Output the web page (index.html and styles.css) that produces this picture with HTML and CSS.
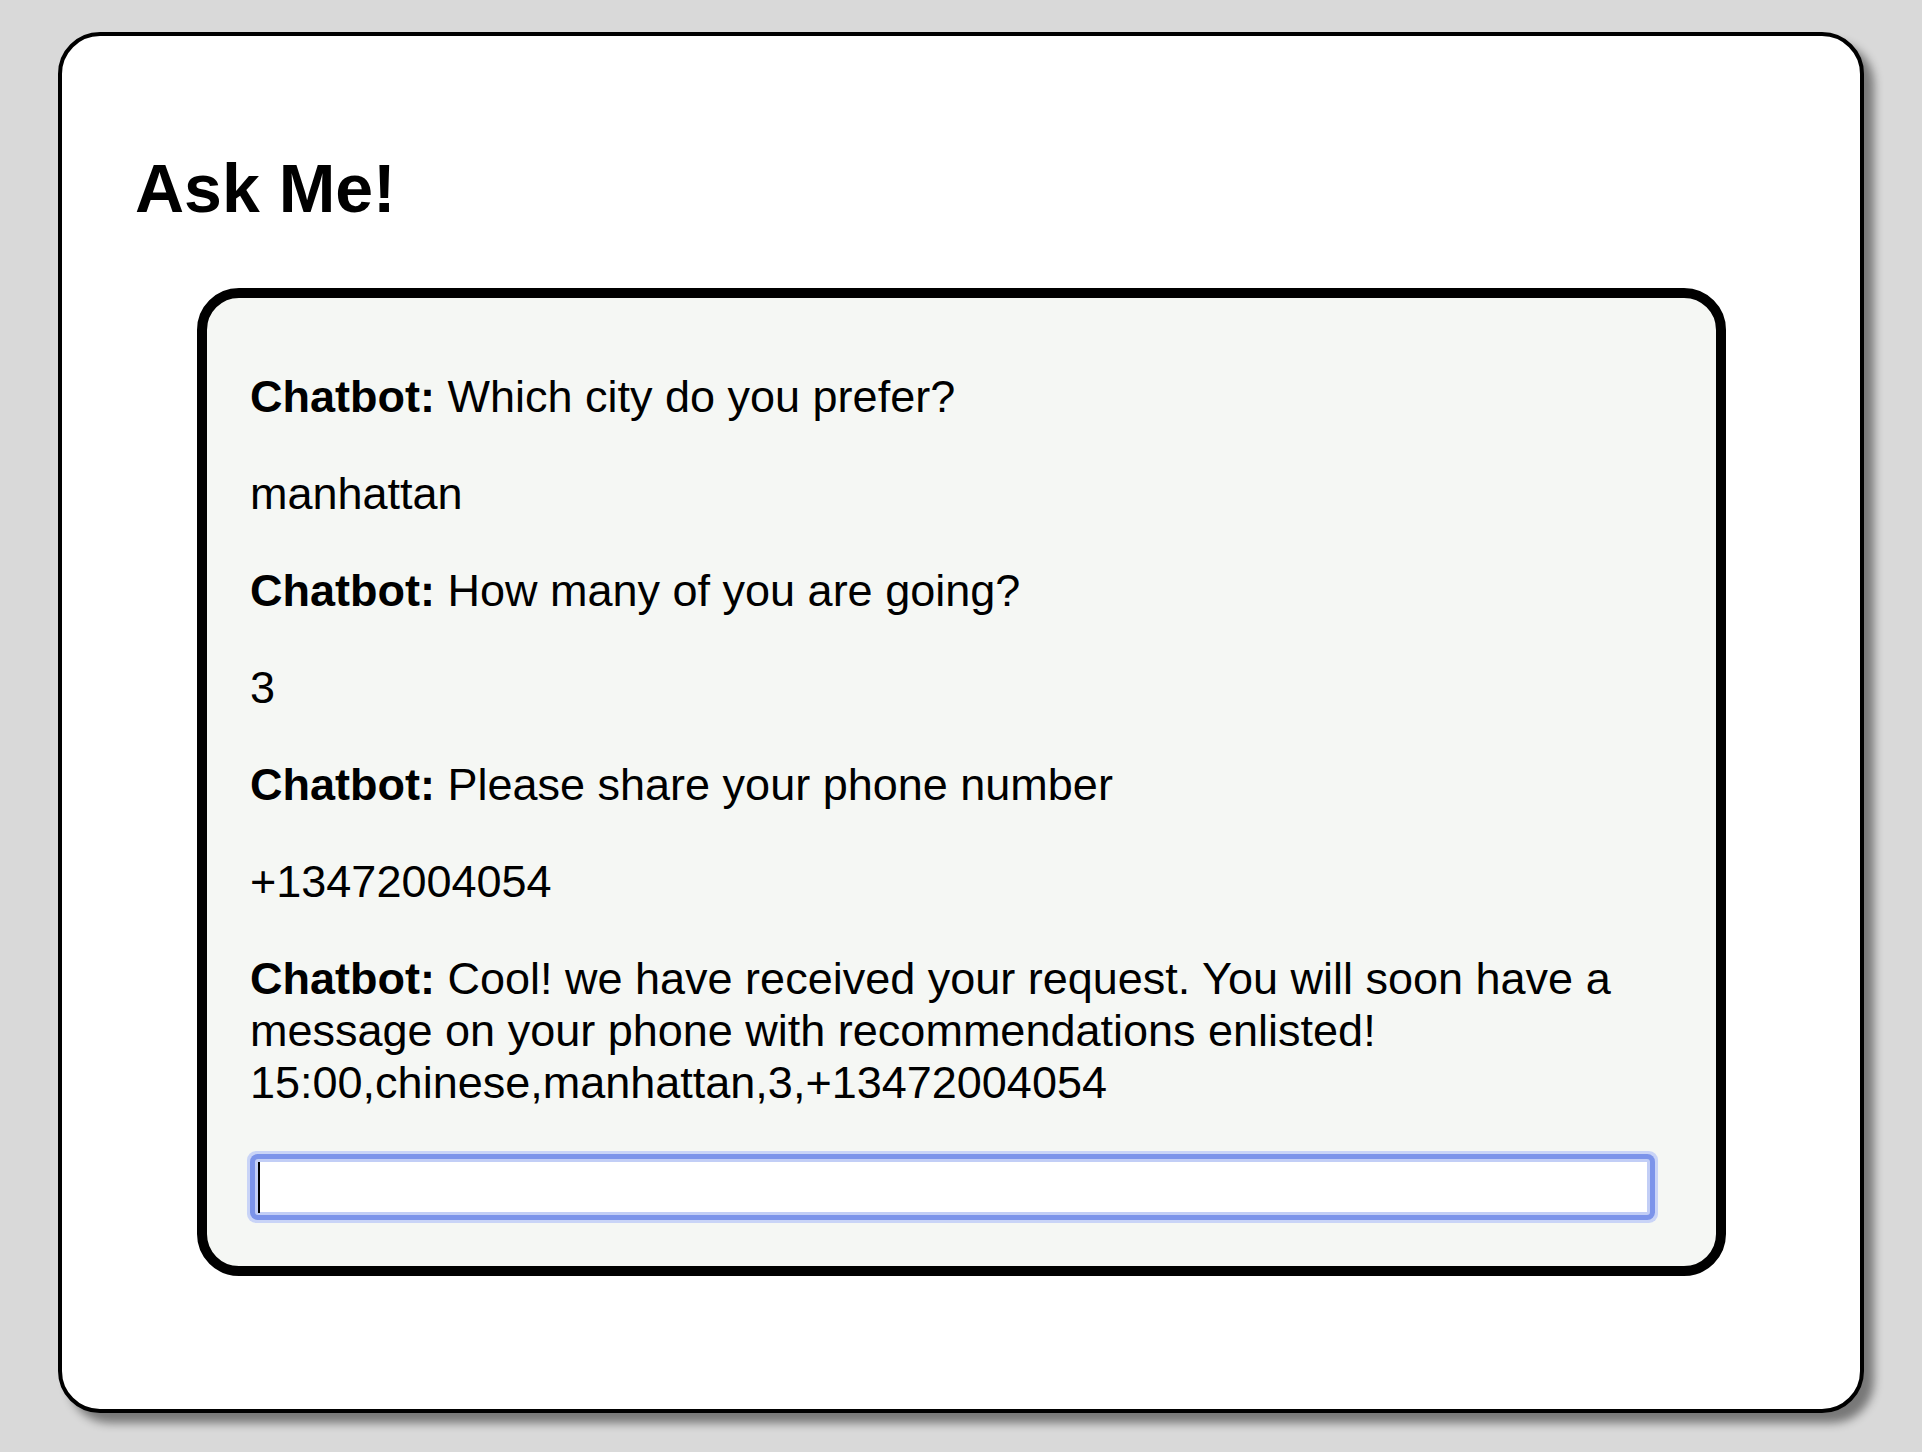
FILE: index.html
```html
<!DOCTYPE html>
<html lang="en">
<head>
<meta charset="utf-8">
<title>Ask Me!</title>
<link rel="stylesheet" href="styles.css">
</head>
<body>
  <main class="card">
    <h1 class="title">Ask Me!</h1>
    <section class="chat">
      <p class="msg"><b>Chatbot:</b> Which city do you prefer?</p>
      <p class="msg">manhattan</p>
      <p class="msg"><b>Chatbot:</b> How many of you are going?</p>
      <p class="msg">3</p>
      <p class="msg"><b>Chatbot:</b> Please share your phone number</p>
      <p class="msg">+13472004054</p>
      <p class="msg"><b>Chatbot:</b> Cool! we have received your request. You will soon have a message on your phone with recommendations enlisted! 15:00,chinese,manhattan,3,+13472004054</p>
      <div class="input-wrap">
        <input class="chat-input" type="text" aria-label="Message">
        <span class="caret"></span>
      </div>
    </section>
  </main>
</body>
</html>
```
FILE: styles.css
```css
html, body {
  margin: 0;
  padding: 0;
}
body {
  background: #d9d9d9;
  font-family: "Liberation Sans", Arial, Helvetica, sans-serif;
  color: #000;
  padding-top: 32px;
  padding-bottom: 39px;
}
.card {
  box-sizing: border-box;
  margin: 0 58px;
  background: #fff;
  border: 4px solid #000;
  border-radius: 42px;
  padding: 113px 73px 133px 73px;
  box-shadow: 10px 10px 10px rgba(0, 0, 0, 0.45);
}
.title {
  margin: 0;
  font-size: 68px;
  font-weight: bold;
  line-height: 78px;
}
.chat {
  margin: 61px 61px 0 62px;
  background: #f5f7f4;
  border: 10px solid #000;
  border-radius: 42px;
  padding: 28px 56px 51px 43px;
}
.msg {
  margin: 45px 0;
  font-size: 45px;
  line-height: 52px;
}
.msg b {
  font-weight: bold;
}
.input-wrap {
  position: relative;
  margin: 50px 0 0 5px;
  width: 1395px;
  height: 56px;
}
.chat-input {
  display: block;
  box-sizing: border-box;
  margin: 0;
  width: 100%;
  height: 56px;
  padding: 0 2px;
  font-family: "Liberation Sans", Arial, sans-serif;
  font-size: 45px;
  background: #fff;
  border: 3px solid #c2cef6;
  border-radius: 3px;
  outline: none;
  caret-color: transparent;
  box-shadow: 0 0 0 5px #7c94ea, 0 0 0 8px #c9d4f7;
}
.caret {
  position: absolute;
  left: 3px;
  top: 3px;
  width: 2px;
  height: 51px;
  background: #000;
}
```
